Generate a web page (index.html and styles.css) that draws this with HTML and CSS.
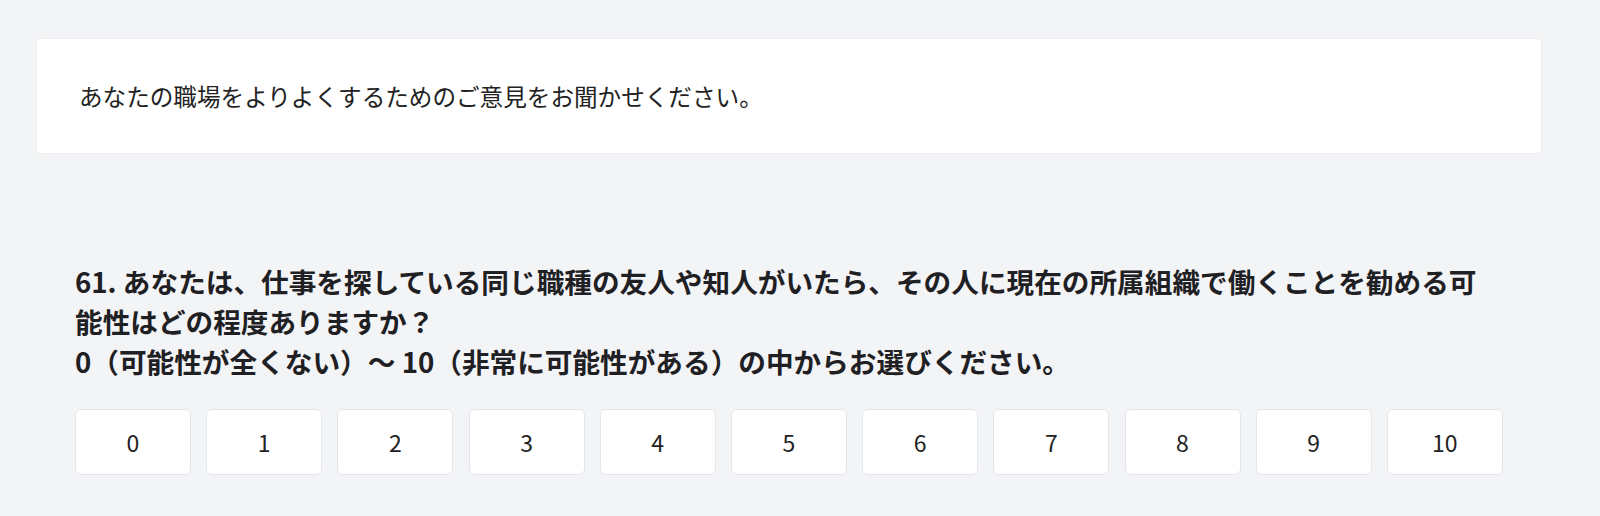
FILE: index.html
```html
<!DOCTYPE html>
<html lang="ja">
<head>
<meta charset="utf-8">
<title>アンケート</title>
<link rel="stylesheet" href="styles.css">
</head>
<body>
<main class="page">
  <section class="intro-card">
    <p class="intro-text">あなたの職場をよりよくするためのご意見をお聞かせください。</p>
  </section>
  <section class="question">
    <h2 class="question-title">61. あなたは、仕事を探している同じ職種の友人や知人がいたら、その人に現在の所属組織で働くことを勧める可能性はどの程度ありますか？<br>0（可能性が全くない）～ 10（非常に可能性がある）の中からお選びください。</h2>
    <div class="scale">
      <button class="scale-btn">0</button>
      <button class="scale-btn">1</button>
      <button class="scale-btn">2</button>
      <button class="scale-btn">3</button>
      <button class="scale-btn">4</button>
      <button class="scale-btn">5</button>
      <button class="scale-btn">6</button>
      <button class="scale-btn">7</button>
      <button class="scale-btn">8</button>
      <button class="scale-btn">9</button>
      <button class="scale-btn">10</button>
    </div>
  </section>
</main>
</body>
</html>
```

FILE: styles.css
```css
html, body {
  margin: 0;
  padding: 0;
  background: #f3f4f6;
  font-family: "Noto Sans CJK JP", "Noto Sans", sans-serif;
  color: #1f2023;
}

.page {
  padding: 38px 0 0 36px;
  width: 1506px;
}

.intro-card {
  height: 116px;
  box-sizing: border-box;
  background: #ffffff;
  border: 1px solid #eceef1;
  border-radius: 5px;
  display: flex;
  align-items: center;
  padding-left: 42px;
}

.intro-text {
  margin: 0;
  font-size: 23.6px;
  font-weight: 400;
  line-height: 32px;
  color: #222;
}

.question {
  padding: 107px 39px 0 39px;
}

.question-title {
  margin: 0;
  font-size: 27.65px;
  font-weight: 700;
  line-height: 40px;
  color: #1f2023;
}

.scale {
  margin-top: 28px;
  display: flex;
  gap: 15.2px;
}

.scale-btn {
  width: 116px;
  height: 66px;
  background: #ffffff;
  border: 1px solid #e3e6ea;
  border-radius: 6px;
  font-family: "Noto Sans CJK JP", "Noto Sans", sans-serif;
  font-size: 23px;
  color: #222;
  padding: 0;
}
```
